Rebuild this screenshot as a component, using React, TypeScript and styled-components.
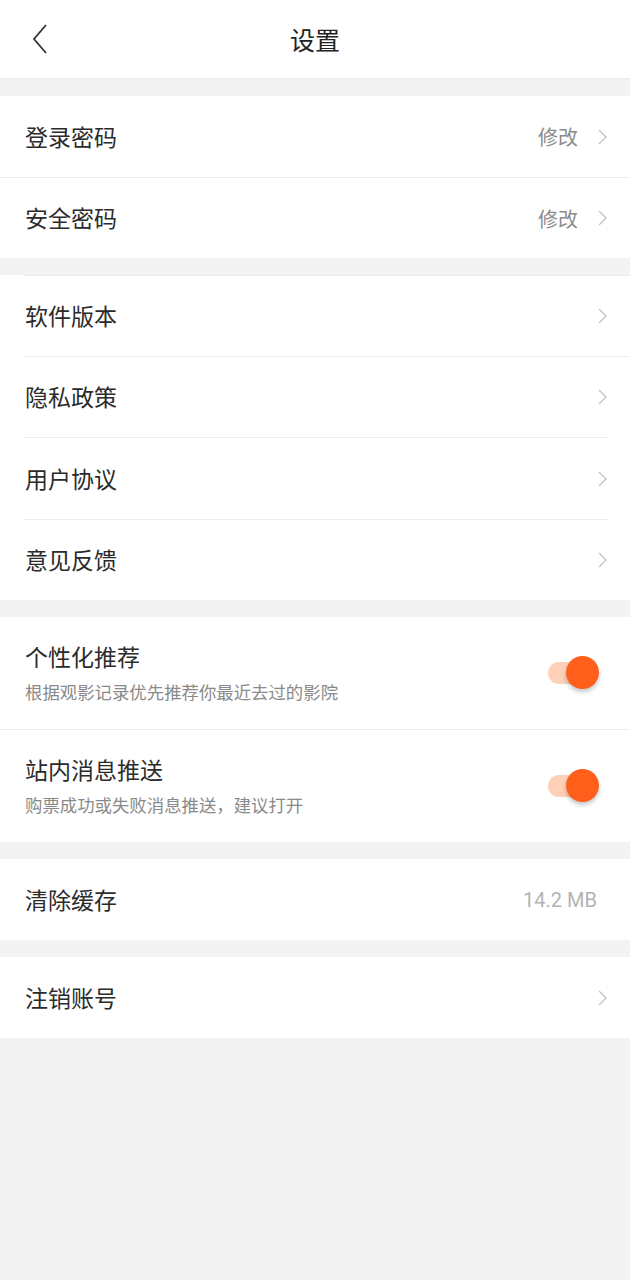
import React, { useState } from 'react'
import styled, { createGlobalStyle } from 'styled-components'

const GlobalStyle = createGlobalStyle`
  html, body {
    margin: 0;
    padding: 0;
    background: #f3f3f3;
    font-family: "Noto Sans CJK SC", "Noto Sans", sans-serif;
  }
`

const Page = styled.div`
  width: 630px;
  min-height: 1280px;
  background: #f3f3f3;
  display: flex;
  flex-direction: column;
  gap: 17px;
`

const Header = styled.div`
  height: 78px;
  background: #fff;
  border-bottom: 1px solid #ececec;
  display: flex;
  align-items: center;
  justify-content: center;
  position: relative;
`

const BackButton = styled.button`
  position: absolute;
  left: 22px;
  top: 19px;
  width: 36px;
  height: 40px;
  border: none;
  background: transparent;
  padding: 0;
  display: flex;
  align-items: center;
  justify-content: center;
`

const Title = styled.h1`
  margin: 0;
  font-size: 25px;
  font-weight: 400;
  color: #222;
`

const Section = styled.div<{ $topLine?: boolean }>`
  background: #fff;
  display: flex;
  flex-direction: column;
  position: relative;

  &::before {
    content: '';
    display: ${({ $topLine }) => ($topLine ? 'block' : 'none')};
    height: 1px;
    margin-left: 24px;
    background: #ececec;
  }
`

const Row = styled.div<{ $h?: number }>`
  height: ${({ $h }) => $h ?? 80}px;
  padding: 0 22px 0 25px;
  display: flex;
  align-items: center;
  justify-content: space-between;
  box-sizing: border-box;
`

const Divider = styled.div<{ $inset?: number; $right?: number }>`
  height: 1px;
  background: #ededed;
  margin-left: ${({ $inset }) => $inset ?? 0}px;
  margin-right: ${({ $right }) => $right ?? 0}px;
`

const TextCol = styled.div`
  display: flex;
  flex-direction: column;
  gap: 11px;
`

const Label = styled.span`
  font-size: 23px;
  color: #2b2b2b;
  line-height: 1.2;
`

const Sub = styled.span`
  font-size: 17.4px;
  color: #8a8a8a;
  line-height: 1.2;
`

const Right = styled.div`
  display: flex;
  align-items: center;
  gap: 19px;
`

const Value = styled.span<{ $latin?: boolean }>`
  font-size: 20px;
  color: ${({ $latin }) => ($latin ? '#b3b3b3' : '#8c8c8c')};
  font-family: ${({ $latin }) =>
    $latin ? 'Roboto, "Noto Sans", sans-serif' : '"Noto Sans CJK SC", sans-serif'};
  margin-right: ${({ $latin }) => ($latin ? '11px' : '0')};
`

const SwitchTrack = styled.button<{ $on: boolean }>`
  position: relative;
  width: 56px;
  height: 40px;
  border: none;
  padding: 0;
  background: transparent;
  margin-right: 8px;

  &::before {
    content: '';
    position: absolute;
    left: 4px;
    top: 9px;
    width: 42px;
    height: 22px;
    border-radius: 11px;
    background: ${({ $on }) => ($on ? '#fdd0b7' : '#ddd')};
  }
`

const Knob = styled.span<{ $on: boolean }>`
  position: absolute;
  top: 3px;
  left: ${({ $on }) => ($on ? '22px' : '0')};
  width: 33px;
  height: 33px;
  border-radius: 50%;
  background: ${({ $on }) => ($on ? '#ff5f1b' : '#fafafa')};
  box-shadow: 0 3px 4px rgba(0, 0, 0, 0.22);
`

const Chevron = () => (
  <svg width="11" height="18" viewBox="0 0 11 18">
    <path d="M2 2 L9 9 L2 16" fill="none" stroke="#c4c4c4" strokeWidth="1.4" />
  </svg>
)

const Toggle = ({ initial }: { initial: boolean }) => {
  const [on, setOn] = useState(initial)
  return (
    <SwitchTrack $on={on} onClick={() => setOn(!on)}>
      <Knob $on={on} />
    </SwitchTrack>
  )
}

const App = () => {
  return (
    <>
      <GlobalStyle />
      <Page>
        <Header>
          <BackButton>
            <svg width="18" height="32" viewBox="0 0 18 32">
              <path d="M15 2 L3 16 L15 30" fill="none" stroke="#333" strokeWidth="1.8" />
            </svg>
          </BackButton>
          <Title>设置</Title>
        </Header>

        <Section>
          <Row $h={81}>
            <Label>登录密码</Label>
            <Right>
              <Value>修改</Value>
              <Chevron />
            </Right>
          </Row>
          <Divider />
          <Row>
            <Label>安全密码</Label>
            <Right>
              <Value>修改</Value>
              <Chevron />
            </Right>
          </Row>
        </Section>

        <Section $topLine>
          <Row>
            <Label>软件版本</Label>
            <Chevron />
          </Row>
          <Divider $inset={24} />
          <Row>
            <Label>隐私政策</Label>
            <Chevron />
          </Row>
          <Divider $inset={24} $right={22} />
          <Row $h={81}>
            <Label>用户协议</Label>
            <Chevron />
          </Row>
          <Divider $inset={24} $right={22} />
          <Row>
            <Label>意见反馈</Label>
            <Chevron />
          </Row>
        </Section>

        <Section>
          <Row $h={112}>
            <TextCol>
              <Label>个性化推荐</Label>
              <Sub>根据观影记录优先推荐你最近去过的影院</Sub>
            </TextCol>
            <Toggle initial />
          </Row>
          <Divider />
          <Row $h={112}>
            <TextCol>
              <Label>站内消息推送</Label>
              <Sub>购票成功或失败消息推送，建议打开</Sub>
            </TextCol>
            <Toggle initial />
          </Row>
        </Section>

        <Section>
          <Row $h={81}>
            <Label>清除缓存</Label>
            <Value $latin>14.2 MB</Value>
          </Row>
        </Section>

        <Section>
          <Row $h={81}>
            <Label>注销账号</Label>
            <Chevron />
          </Row>
        </Section>
      </Page>
    </>
  )
}

export default App
